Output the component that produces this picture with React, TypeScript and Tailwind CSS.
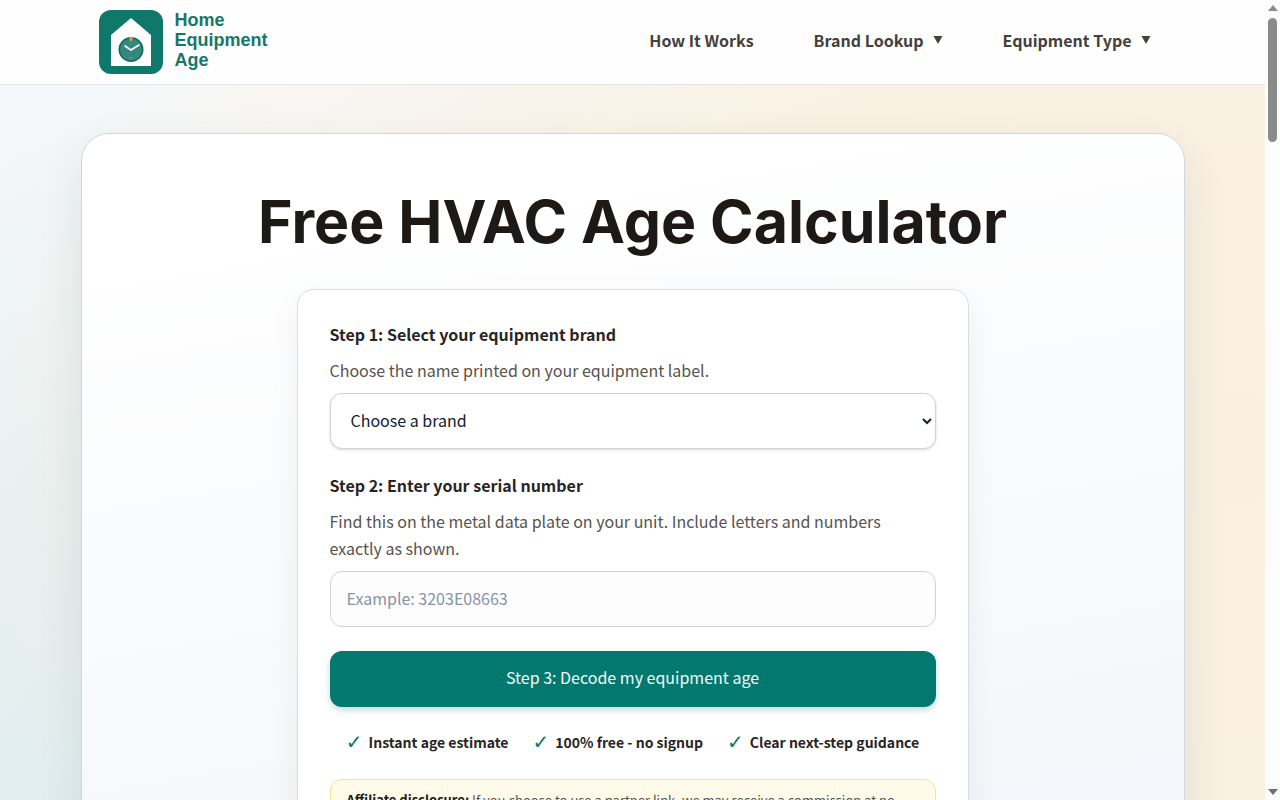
import { useState } from "react";

const brands = ["Carrier", "Trane", "Lennox", "Goodman", "Rheem", "York"];

const benefits = [
  "Instant age estimate",
  "100% free - no signup",
  "Clear next-step guidance",
];

function Logo() {
  return (
    <a
      href="#home"
      className="flex items-center gap-3 font-['Liberation_Sans',sans-serif] text-lg leading-5 font-bold text-[#19766a]"
    >
      <svg viewBox="0 0 64 64" className="size-16 shrink-0" aria-hidden="true">
        <rect width="64" height="64" rx="12" fill="#10786b" />
        <path d="M32 8 52 25V56H12V25Z" fill="#fff" />
        <circle cx="32" cy="39.5" r="12.5" fill="#17695f" />
        <circle cx="32" cy="39.5" r="10.8" fill="#33897d" />
        <path d="M29.8 27.2h4.4l-2.2 5z" fill="#e0a04a" />
        <path
          d="m26 36 6 4 8-5"
          fill="none"
          stroke="#fff"
          strokeWidth="1.6"
          strokeLinecap="round"
          strokeLinejoin="round"
        />
        <circle cx="32" cy="48" r=".6" fill="#cfe8e4" />
      </svg>
      <span className="pb-1">
        Home
        <br />
        Equipment
        <br />
        Age
      </span>
    </a>
  );
}

function Caret() {
  return (
    <svg viewBox="0 0 10 8" className="h-2 w-[10px]" aria-hidden="true">
      <path d="M.5 0h9L5 8z" fill="currentColor" />
    </svg>
  );
}

function Header() {
  return (
    <header className="border-b border-[#e2e4e6] bg-[#fefefe]">
      <div className="mx-auto flex h-[84px] max-w-[1104px] items-center justify-between pr-[34px] pl-[18px]">
        <Logo />
        <nav className="flex items-center gap-15 pb-1 text-base font-semibold text-[#44403c]">
          <a href="#how-it-works">How It Works</a>
          <button type="button" className="flex items-center gap-[9px]">
            Brand Lookup
            <Caret />
          </button>
          <button type="button" className="flex items-center gap-[9px]">
            Equipment Type
            <Caret />
          </button>
        </nav>
      </div>
    </header>
  );
}

function CalculatorForm() {
  const [brand, setBrand] = useState("");
  const [serial, setSerial] = useState("");

  return (
    <form
      onSubmit={(e) => e.preventDefault()}
      className="mx-auto max-w-2xl rounded-2xl border border-[#d9dee6] bg-white p-8 text-base shadow-[0_12px_32px_rgba(15,23,42,0.06)]"
    >
      <label htmlFor="brand" className="block leading-[25px] font-semibold text-[#292524]">
        Step 1: Select your equipment brand
      </label>
      <p className="mt-[10px] leading-[27px] text-[#57534e]">
        Choose the name printed on your equipment label.
      </p>
      <select
        id="brand"
        value={brand}
        onChange={(e) => setBrand(e.target.value)}
        className="mt-[9px] h-14 w-full rounded-xl border border-[#d1d3d6] bg-white px-4 pb-0.5 text-[#0f2137] shadow-[0_1px_3px_rgba(0,0,0,0.15)]"
      >
        <option value="">Choose a brand</option>
        {brands.map((x) => (
          <option key={x} value={x}>
            {x}
          </option>
        ))}
      </select>

      <label htmlFor="serial" className="mt-6 block leading-[25px] font-semibold text-[#292524]">
        Step 2: Enter your serial number
      </label>
      <p className="mt-[10px] leading-[27px] text-[#57534e]">
        Find this on the metal data plate on your unit. Include letters and
        numbers exactly as shown.
      </p>
      <input
        id="serial"
        type="text"
        value={serial}
        onChange={(e) => setSerial(e.target.value)}
        placeholder="Example: 3203E08663"
        className="mt-[9px] h-14 w-full rounded-xl border border-[#d1d3d6] bg-[#fdfdfd] px-4 pb-0.5 text-[#0f2137] placeholder:text-[#8794a5]"
      />

      <button
        type="submit"
        className="mt-6 h-14 w-full rounded-xl bg-[#03786f] pb-1 text-[#f2fbfa] shadow-[0_3px_6px_rgba(3,120,111,0.25)]"
      >
        Step 3: Decode my equipment age
      </button>

      <ul className="mt-6 flex justify-center gap-x-6 text-sm leading-[22px] font-semibold text-[#292524]">
        {benefits.map((x) => (
          <li key={x} className="flex items-center gap-1.5">
            <span className="font-['DejaVu_Sans',sans-serif] text-xl leading-[22px] font-normal text-[#0b7a70]">
              ✓
            </span>
            {x}
          </li>
        ))}
      </ul>

      <p className="mt-[26px] rounded-xl border border-[#f7e58e] bg-[#fffbeb] px-4 py-2.5 text-[13px] leading-5 text-[#57534e]">
        <strong className="font-bold text-[#1c1917]">Affiliate disclosure:</strong>{" "}
        If you choose to use a partner link, we may receive a commission at no
        extra cost to you.
      </p>
    </form>
  );
}

function Scrollbar() {
  return (
    <div
      aria-hidden="true"
      className="flex w-[15px] shrink-0 flex-col items-center justify-between bg-[#fcfcfc] py-[5px]"
    >
      <div className="flex flex-col items-center gap-[7px]">
        <svg viewBox="0 0 10 6" className="h-[6px] w-[10px]">
          <path d="M5 0 10 6H0z" fill="#8b8b8b" />
        </svg>
        <div className="h-[124px] w-[9px] rounded-full bg-[#8b8b8b]" />
      </div>
      <svg viewBox="0 0 10 6" className="h-[6px] w-[10px]">
        <path d="M0 0H10L5 6z" fill="#6f6f6f" />
      </svg>
    </div>
  );
}

export default function App() {
  return (
    <div className="flex h-screen font-['Noto_Sans_CJK_SC','Source_Sans_3','Open_Sans',sans-serif]">
      <div className="min-w-0 flex-1 overflow-hidden">
        <Header />
        <main className="bg-[#f6f9fc] bg-[radial-gradient(circle_at_0%_80%,rgba(13,118,116,0.1),transparent_58%),radial-gradient(ellipse_at_95%_35%,rgba(255,228,184,0.42),rgba(255,228,184,0.38)_40%,transparent_78%)] px-4 py-12">
          <section className="mx-auto max-w-[1104px] rounded-[28px] border border-[#cfd6de] bg-linear-170 from-white from-10% to-[#eff3f8] px-6 pt-13 pb-48 shadow-[0_20px_48px_rgba(15,60,70,0.09)]">
            <h1 className="mb-8 text-center font-['Inter',sans-serif] text-[59px] leading-[71px] font-bold text-[#1c1917]">
              Free HVAC Age Calculator
            </h1>
            <CalculatorForm />
          </section>
        </main>
      </div>
      <Scrollbar />
    </div>
  );
}
